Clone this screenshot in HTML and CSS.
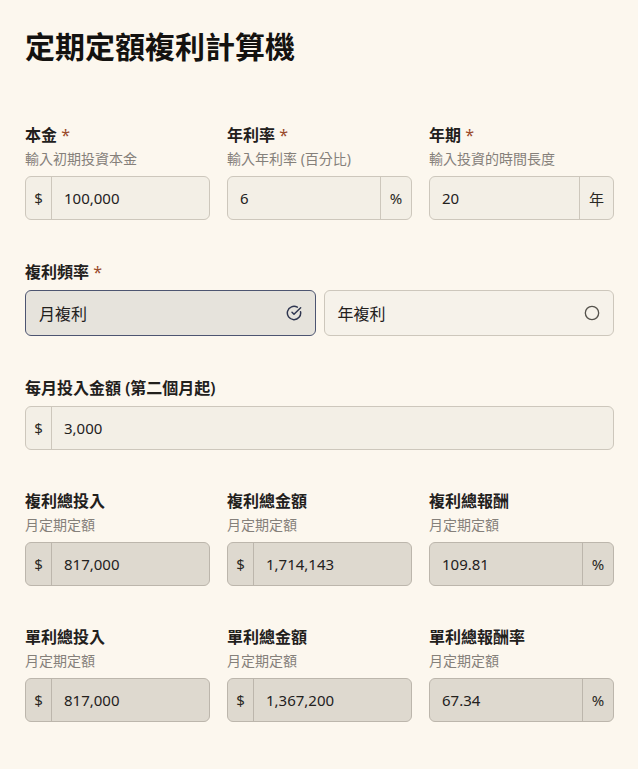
FILE: index.html
```html
<!DOCTYPE html>
<html lang="zh-Hant">
<head>
  <meta charset="UTF-8" />
  <meta name="viewport" content="width=device-width, initial-scale=1.0" />
  <title>定期定額複利計算機</title>
  <link rel="stylesheet" href="styles.css">
</head>
<body>
  <div id="app">
    <h1>定期定額複利計算機</h1>

    <div class="row cols-3">
      <div class="field">
        <label>本金 <span class="req">*</span></label>
        <p class="hint">輸入初期投資本金</p>
        <div class="input-group">
          <span class="addon">$</span>
          <input type="text" value="100,000">
        </div>
      </div>
      <div class="field">
        <label>年利率 <span class="req">*</span></label>
        <p class="hint">輸入年利率 (百分比)</p>
        <div class="input-group">
          <input type="text" value="6">
          <span class="addon suffix">%</span>
        </div>
      </div>
      <div class="field">
        <label>年期 <span class="req">*</span></label>
        <p class="hint">輸入投資的時間長度</p>
        <div class="input-group">
          <input type="text" value="20">
          <span class="addon suffix wide">年</span>
        </div>
      </div>
    </div>

    <div class="row">
      <label>複利頻率 <span class="req">*</span></label>
      <div class="radio-group">
        <div class="radio-card selected">
          <span>月複利</span>
          <svg width="16" height="16" viewBox="0 0 24 24" fill="none" stroke="#2f3650" stroke-width="2.2" stroke-linecap="round" stroke-linejoin="round">
            <path d="M21.8 10A10 10 0 1 1 17 3.34"/>
            <path d="m9 11 3 3L22 4"/>
          </svg>
        </div>
        <div class="radio-card">
          <span>年複利</span>
          <svg width="16" height="16" viewBox="0 0 24 24" fill="none" stroke="#55524c" stroke-width="2">
            <circle cx="12" cy="12" r="10"/>
          </svg>
        </div>
      </div>
    </div>

    <div class="row tight">
      <label>每月投入金額 (第二個月起)</label>
      <div class="input-group">
        <span class="addon">$</span>
        <input type="text" value="3,000">
      </div>
    </div>

    <div class="row cols-3 tight">
      <div class="field">
        <label>複利總投入</label>
        <p class="hint">月定期定額</p>
        <div class="input-group readonly">
          <span class="addon">$</span>
          <input type="text" value="817,000" readonly>
        </div>
      </div>
      <div class="field">
        <label>複利總金額</label>
        <p class="hint">月定期定額</p>
        <div class="input-group readonly">
          <span class="addon">$</span>
          <input type="text" value="1,714,143" readonly>
        </div>
      </div>
      <div class="field">
        <label>複利總報酬</label>
        <p class="hint">月定期定額</p>
        <div class="input-group readonly">
          <input type="text" value="109.81" readonly>
          <span class="addon suffix">%</span>
        </div>
      </div>
    </div>

    <div class="row cols-3">
      <div class="field">
        <label>單利總投入</label>
        <p class="hint">月定期定額</p>
        <div class="input-group readonly">
          <span class="addon">$</span>
          <input type="text" value="817,000" readonly>
        </div>
      </div>
      <div class="field">
        <label>單利總金額</label>
        <p class="hint">月定期定額</p>
        <div class="input-group readonly">
          <span class="addon">$</span>
          <input type="text" value="1,367,200" readonly>
        </div>
      </div>
      <div class="field">
        <label>單利總報酬率</label>
        <p class="hint">月定期定額</p>
        <div class="input-group readonly">
          <input type="text" value="67.34" readonly>
          <span class="addon suffix">%</span>
        </div>
      </div>
    </div>
  </div>
</body>
</html>
```

FILE: styles.css
```css
/* Base */
*, *::before, *::after {
  box-sizing: border-box;
  margin: 0;
  padding: 0;
}
html, body {
  font-family: 'Noto Sans', 'Noto Sans CJK TC', sans-serif;
  background-color: #fcf7ee;
  color: #1f1d1a;
}

#app {
  padding: 27px 24px 40px 25px;
}

h1 {
  font-size: 30px;
  line-height: 40px;
  font-weight: 700;
  color: #141210;
  margin-bottom: 58px;
}

/* Rows */
.row {
  display: flex;
  flex-direction: column;
  margin-bottom: 42px;
}
.row.tight {
  margin-bottom: 41px;
}
.row.cols-3 {
  display: grid;
  grid-template-columns: repeat(3, minmax(0, 1fr));
  gap: 17px;
}
.field {
  display: flex;
  flex-direction: column;
  min-width: 0;
}

label {
  font-size: 16px;
  line-height: 20px;
  font-weight: 600;
  color: #22201c;
  margin-bottom: 8px;
}
.field label {
  margin-bottom: 0;
}
.req {
  color: #9a4a2a;
  font-weight: 400;
}
.hint {
  font-size: 14px;
  line-height: 20px;
  color: #85807a;
  margin-top: 4px;
  margin-bottom: 7px;
}

/* Input groups */
.input-group {
  display: flex;
  height: 44px;
  border: 1px solid #cdc7bc;
  border-radius: 6px;
  background-color: #f3efe6;
  overflow: hidden;
}
.input-group input {
  flex: 1;
  width: 0;
  min-width: 0;
  border: none;
  background: transparent;
  font-family: inherit;
  font-size: 15px;
  color: #23211d;
  padding: 0 12px;
  outline: none;
}
.addon {
  display: flex;
  align-items: center;
  justify-content: center;
  width: 26px;
  font-size: 15px;
  color: #2a2824;
  border-right: 1px solid #cdc7bc;
  flex-shrink: 0;
}
.addon.suffix {
  width: 31px;
  border-right: none;
  border-left: 1px solid #cdc7bc;
}
.addon.suffix.wide {
  width: 34px;
}

.input-group.readonly {
  background-color: #ded9cf;
  border-color: #bcb6ac;
}
.input-group.readonly .addon {
  border-color: #bcb6ac;
}

/* Radio cards */
.radio-group {
  display: flex;
  gap: 8px;
}
.radio-card {
  flex: 1;
  display: flex;
  align-items: center;
  justify-content: space-between;
  height: 46px;
  padding: 0 13px;
  border: 1px solid #cdc7bc;
  border-radius: 6px;
  background-color: #f6f2ea;
  font-size: 16px;
  color: #22201c;
}
.radio-card.selected {
  background-color: #e6e3dc;
  border-color: #4d5571;
}
```
